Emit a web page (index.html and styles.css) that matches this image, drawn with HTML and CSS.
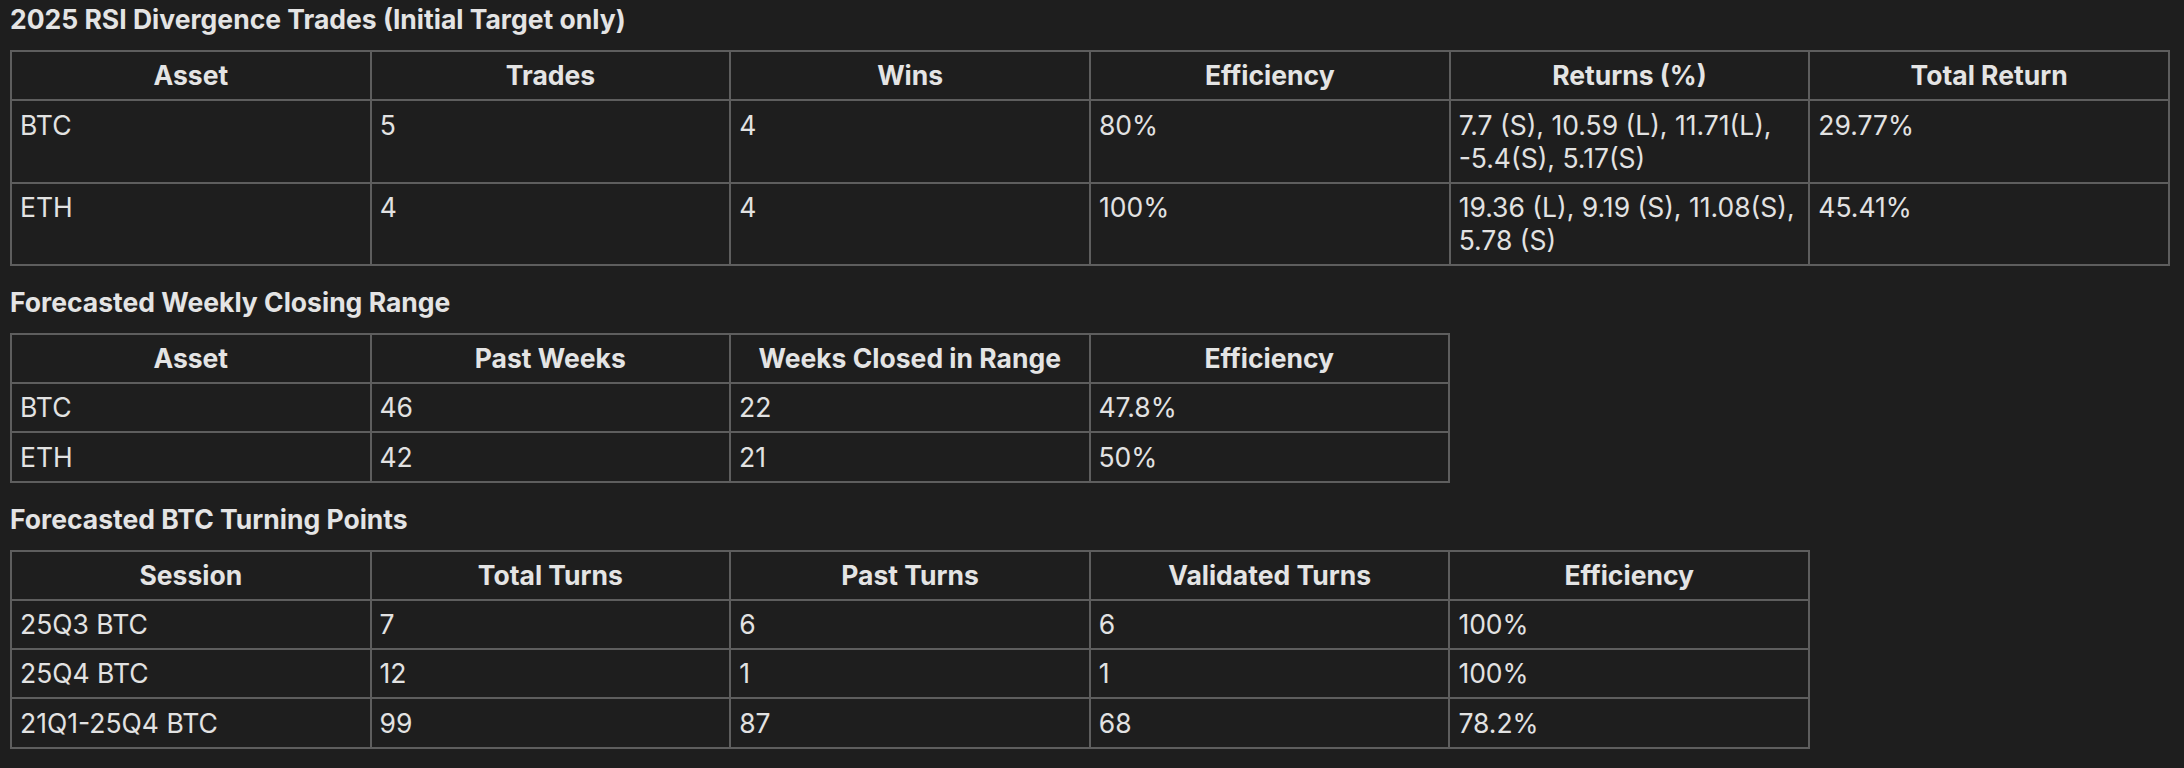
FILE: index.html
```html
<!DOCTYPE html>
<html lang="en">
<head>
<meta charset="utf-8">
<title>Performance Tables</title>
<link rel="stylesheet" href="styles.css">
</head>
<body>
<main class="page">
  <h3 class="section-title">2025 RSI Divergence Trades (Initial Target only)</h3>
  <table class="grid cols-6">
    <thead>
      <tr><th>Asset</th><th>Trades</th><th>Wins</th><th>Efficiency</th><th>Returns (%)</th><th>Total Return</th></tr>
    </thead>
    <tbody>
      <tr><td>BTC</td><td>5</td><td>4</td><td>80%</td><td>7.7 (S), 10.59 (L), 11.71(L), -5.4(S), 5.17(S)</td><td>29.77%</td></tr>
      <tr><td>ETH</td><td>4</td><td>4</td><td>100%</td><td>19.36 (L), 9.19 (S), 11.08(S), 5.78 (S)</td><td>45.41%</td></tr>
    </tbody>
  </table>

  <h3 class="section-title">Forecasted Weekly Closing Range</h3>
  <table class="grid cols-4">
    <thead>
      <tr><th>Asset</th><th>Past Weeks</th><th>Weeks Closed in Range</th><th>Efficiency</th></tr>
    </thead>
    <tbody>
      <tr><td>BTC</td><td>46</td><td>22</td><td>47.8%</td></tr>
      <tr><td>ETH</td><td>42</td><td>21</td><td>50%</td></tr>
    </tbody>
  </table>

  <h3 class="section-title">Forecasted BTC Turning Points</h3>
  <table class="grid cols-5">
    <thead>
      <tr><th>Session</th><th>Total Turns</th><th>Past Turns</th><th>Validated Turns</th><th>Efficiency</th></tr>
    </thead>
    <tbody>
      <tr><td>25Q3 BTC</td><td>7</td><td>6</td><td>6</td><td>100%</td></tr>
      <tr><td>25Q4 BTC</td><td>12</td><td>1</td><td>1</td><td>100%</td></tr>
      <tr><td>21Q1-25Q4 BTC</td><td>99</td><td>87</td><td>68</td><td>78.2%</td></tr>
    </tbody>
  </table>
</main>
</body>
</html>
```

FILE: styles.css
```css
html, body {
  margin: 0;
  padding: 0;
  background: #1e1e1e;
}

body {
  color: #e2e2e2;
  font-family: Inter, "Noto Sans", "Liberation Sans", sans-serif;
  font-size: 26.5px;
  line-height: 33px;
}

.page {
  padding: 2px 14px 0 10px;
  display: flex;
  flex-direction: column;
  align-items: flex-start;
}

.section-title {
  margin: 0;
  font-size: 26.5px;
  font-weight: 700;
  line-height: 34px;
  color: #e4e4e4;
}

.grid {
  border-collapse: collapse;
  table-layout: fixed;
  margin: 14px 0 19px;
}

.cols-6 { width: 2160px; }
.cols-4 { width: 1440px; }
.cols-5 { width: 1800px; }

.grid th,
.grid td {
  border: 2px solid #5e5e5e;
  padding: 7.25px 3px 7px 8px;
  vertical-align: top;
}

.grid th {
  font-weight: 700;
  text-align: center;
  padding-left: 5px;
  padding-right: 5px;
  color: #e4e4e4;
}

.grid td {
  font-weight: 400;
  text-align: left;
}
```
